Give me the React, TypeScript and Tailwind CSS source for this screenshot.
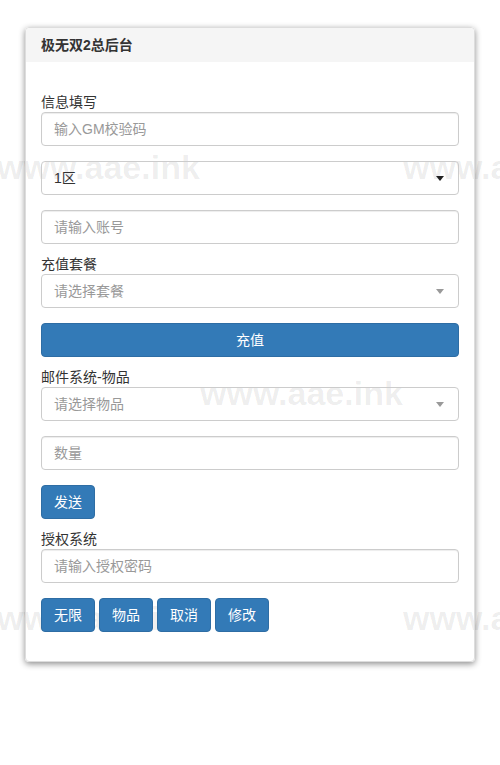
import React from "react";

const font = { fontFamily: '"Liberation Sans", "Noto Sans CJK SC", sans-serif' };

function Caret({ color }: { color: string }) {
  return (
    <svg width="8" height="5" viewBox="0 0 8 5" className="absolute right-[14px] top-[14px]">
      <polygon points="0,0 8,0 4,5" fill={color} />
    </svg>
  );
}

function TextInput({ placeholder }: { placeholder: string }) {
  return (
    <input
      placeholder={placeholder}
      readOnly
      style={font}
      className="block h-[34px] w-full rounded-[4px] border border-[#cccccc] bg-transparent px-[12px] text-[14px] text-[#555] shadow-[inset_0_1px_1px_rgba(0,0,0,0.075)] outline-none placeholder:text-[#999]"
    />
  );
}

function Select({ text, placeholder, caret }: { text: string; placeholder?: boolean; caret: string }) {
  return (
    <div className="relative flex h-[34px] w-full items-center rounded-[4px] border border-[#cccccc] bg-transparent px-[12px] text-[14px]">
      <span className={placeholder ? "text-[#999]" : "text-[#333]"}>{text}</span>
      <Caret color={caret} />
    </div>
  );
}

function Label({ children }: { children: React.ReactNode }) {
  return <div className="h-[20px] text-[14px] leading-[20px] text-[#333]">{children}</div>;
}

function Btn({ children }: { children: React.ReactNode }) {
  return (
    <button
      style={font}
      className="h-[34px] rounded-[4px] border border-[#2e6da4] bg-[#337ab7] px-[12px] text-[14px] leading-[20px] text-white"
    >
      {children}
    </button>
  );
}

export default function App() {
  return (
    <div style={font} className="relative min-h-[765px] w-[500px] overflow-hidden bg-white">
      <div className="pointer-events-none absolute inset-0 text-[34px] font-bold leading-none text-black/[0.07]">
        <span className="absolute left-[-3px] top-[150px] whitespace-nowrap">www.aae.ink</span>
        <span className="absolute left-[403px] top-[150px] whitespace-nowrap">www.aae.ink</span>
        <span className="absolute left-[200px] top-[376px] whitespace-nowrap">www.aae.ink</span>
        <span className="absolute left-[-3px] top-[601px] whitespace-nowrap">www.aae.ink</span>
        <span className="absolute left-[403px] top-[601px] whitespace-nowrap">www.aae.ink</span>
      </div>
      <div className="relative pl-[25px] pt-[27px]">
        <div className="w-[450px] rounded-[4px] border border-[#dddddd] bg-transparent shadow-[0_2px_6px_rgba(0,0,0,0.45)]">
          <div className="h-[34px] rounded-t-[4px] bg-[#f5f5f5] px-[15px] text-[14px] font-bold leading-[34px] text-[#333]">
            极无双2总后台
          </div>
          <div className="px-[15px] pb-[29px] pt-[30px]">
            <Label>信息填写</Label>
            <TextInput placeholder="输入GM校验码" />
            <div className="mt-[15px]">
              <Select text="1区" caret="#222" />
            </div>
            <div className="mt-[15px]">
              <TextInput placeholder="请输入账号" />
            </div>
            <div className="mt-[10px]">
              <Label>充值套餐</Label>
              <Select text="请选择套餐" placeholder caret="#999" />
            </div>
            <div className="mt-[15px]">
              <button
                style={font}
                className="block h-[34px] w-full rounded-[4px] border border-[#2e6da4] bg-[#337ab7] text-[14px] text-white"
              >
                充值
              </button>
            </div>
            <div className="mt-[10px]">
              <Label>邮件系统-物品</Label>
              <Select text="请选择物品" placeholder caret="#999" />
            </div>
            <div className="mt-[15px]">
              <TextInput placeholder="数量" />
            </div>
            <div className="mt-[15px]">
              <Btn>发送</Btn>
            </div>
            <div className="mt-[10px]">
              <Label>授权系统</Label>
              <TextInput placeholder="请输入授权密码" />
            </div>
            <div className="mt-[15px] flex gap-[4px]">
              <Btn>无限</Btn>
              <Btn>物品</Btn>
              <Btn>取消</Btn>
              <Btn>修改</Btn>
            </div>
          </div>
        </div>
      </div>
    </div>
  );
}
